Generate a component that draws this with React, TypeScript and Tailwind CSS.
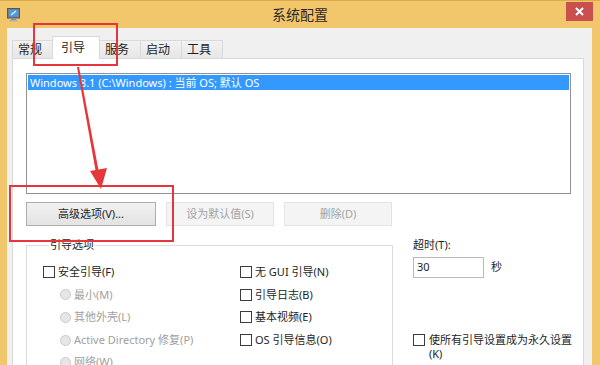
const font = "font-['Noto_Sans','Noto_Sans_CJK_SC',sans-serif]";

const Checkbox = () => (
  <span className="block w-[12px] h-[12px] border border-[#3c3c3c] bg-white shrink-0" />
);

const Radio = () => (
  <span className="block w-[11px] h-[11px] rounded-full border border-[#cacaca] bg-[#e6e6e6] shrink-0" />
);

const CheckRow = ({ label }: { label: string }) => (
  <div className="flex items-center gap-[3px] h-[22.6px]">
    <Checkbox />
    <span>{label}</span>
  </div>
);

const RadioRow = ({ label }: { label: string }) => (
  <div className="flex items-center gap-[3px] h-[22.6px] pl-[17px] text-[#a0a0a0]">
    <Radio />
    <span>{label}</span>
  </div>
);

const Tab = ({ label, active }: { label: string; active?: boolean }) =>
  active ? (
    <div className="relative z-10 -ml-[2px] -mb-px w-[48px] h-[23px] bg-white border border-b-0 border-[#d9d9d9] pl-[8px] pt-[2px] text-[12px]">
      {label}
    </div>
  ) : (
    <div className="-ml-px first:ml-0 w-[42px] h-[18px] bg-gradient-to-b from-[#f2f2f2] to-[#e6e6e6] border border-b-0 border-[#d9d9d9] pl-[5px] pt-px text-[12px] leading-[16px]">
      {label}
    </div>
  );

const MonitorIcon = () => (
  <svg width="13" height="14" viewBox="0 0 13 14">
    <rect x="0.5" y="0.5" width="12" height="9.5" fill="#6f7f96" stroke="#4d5a6b" />
    <rect x="2" y="2" width="9" height="6.5" fill="#4f9be0" />
    <path d="M4 7 L9 3" stroke="#e8f2ff" strokeWidth="1.2" />
    <rect x="4" y="10.5" width="5" height="1.5" fill="#8a94a3" />
    <rect x="2.5" y="12" width="8" height="1.5" fill="#a9b1bc" />
  </svg>
);

export default function App() {
  return (
    <div className={`relative w-[600px] h-[365px] overflow-hidden bg-[#f2c76b] border-t border-[#ddab4c] text-[11px] text-[#1e1e1e] ${font}`}>
      {/* title bar */}
      <div className="grid grid-cols-[1fr_auto_1fr] h-[27px]">
        <div className="pl-[7px] pt-[7px]">
          <MonitorIcon />
        </div>
        <div className="pt-[4px] text-[14px] text-[#2a2a2a] leading-[20px]">系统配置</div>
        <div className="flex justify-end items-start pr-[7px] pt-px">
          <div className="flex items-center justify-center w-[27px] h-[19px] bg-[#c9504f] text-white">
            <svg width="9" height="9" viewBox="0 0 9 9">
              <path d="M1 1 L8 8 M8 1 L1 8" stroke="#fff" strokeWidth="2" />
            </svg>
          </div>
        </div>
      </div>

      {/* client */}
      <div className="ml-[7px] mr-[8px] h-[338px] bg-[#f0f0f0] pt-[9px]">
        <div className="flex items-end h-[21px] pl-[5px]">
          <Tab label="常规" />
          <Tab label="引导" active />
          <Tab label="服务" />
          <Tab label="启动" />
          <Tab label="工具" />
        </div>

        <div className="ml-[5px] mr-[8px] h-[320px] bg-white border border-[#d9d9d9] pl-[13px] pt-[14px]">
          {/* OS list */}
          <div className="w-[545px] h-[121px] border border-[#8f9399] p-px">
            <div className="h-[15px] bg-[#3399ff] text-white pl-[2px] leading-[15px]">
              Windows 8.1 (C:\Windows) : 当前 OS; 默认 OS
            </div>
          </div>

          {/* buttons */}
          <div className="flex gap-[10px] mt-[8px]">
            <div className="w-[130px] h-[24px] flex items-center justify-center border border-[#adadad] bg-gradient-to-b from-[#f2f2f2] to-[#e3e3e3]">
              高级选项(V)...
            </div>
            <div className="w-[108px] h-[24px] flex items-center justify-center border border-[#e3e3e3] bg-[#f4f4f4] text-[#a3a3a3]">
              设为默认值(S)
            </div>
            <div className="w-[108px] h-[24px] flex items-center justify-center border border-[#e3e3e3] bg-[#f4f4f4] text-[#a3a3a3]">
              删除(D)
            </div>
          </div>

          {/* options */}
          <div className="flex mt-[12px]">
            <fieldset className="w-[367px] h-[160px] border border-[#dcdcdc] pl-[16px]">
              <legend className="ml-[6px] px-px leading-[14px]">引导选项</legend>
              <div className="grid grid-cols-[197px_1fr] pt-[9px]">
                <div>
                  <CheckRow label="安全引导(F)" />
                  <RadioRow label="最小(M)" />
                  <RadioRow label="其他外壳(L)" />
                  <RadioRow label="Active Directory 修复(P)" />
                  <RadioRow label="网络(W)" />
                </div>
                <div>
                  <CheckRow label="无 GUI 引导(N)" />
                  <CheckRow label="引导日志(B)" />
                  <CheckRow label="基本视频(E)" />
                  <CheckRow label="OS 引导信息(O)" />
                </div>
              </div>
            </fieldset>

            <div className="ml-[20px] flex flex-col">
              <div className="leading-[14px]">超时(T):</div>
              <div className="flex items-center gap-[7px] mt-[5px]">
                <div className="w-[71px] h-[21px] border border-[#b9b9b9] pl-[3px] leading-[18px]">30</div>
                <span>秒</span>
              </div>
              <div className="flex items-start gap-[4px] mt-[55px]">
                <span className="mt-px">
                  <Checkbox />
                </span>
                <span className="w-[146px] leading-[14px]">使所有引导设置成为永久设置(K)</span>
              </div>
            </div>
          </div>
        </div>
      </div>

      {/* red annotations */}
      <div className="absolute left-[33px] top-[22px] w-[85px] h-[43px] border-2 border-[#e5363b]" />
      <div className="absolute left-[9px] top-[184px] w-[165px] h-[57px] border-2 border-[#e5363b]" />
      <svg className="absolute left-0 top-0 pointer-events-none" width="600" height="365">
        <polygon points="77,66 79,66 99,172 96,172" fill="#e5363b" />
        <polygon points="90,170 107,167 101,188" fill="#e5363b" />
      </svg>
    </div>
  );
}
